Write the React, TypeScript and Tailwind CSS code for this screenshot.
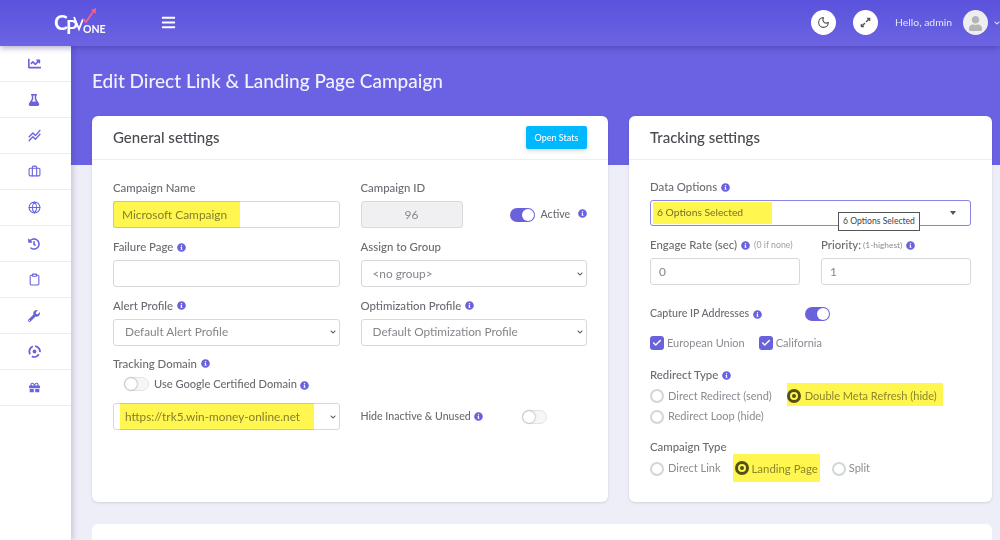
import { ReactNode } from 'react';
import { FaBars, FaChartLine, FaChevronDown, FaExpandAlt, FaFlask, FaGift, FaHistory, FaInfoCircle, FaUser, FaWrench } from 'react-icons/fa';
import { MdStackedLineChart } from 'react-icons/md';
import { Briefcase, Check, Clipboard, Globe, Moon } from 'lucide-react';

const Logo = () => (
  <svg width="56" height="30" viewBox="0 0 56 30" fill="none">
    <text x="0" y="22" fontFamily="Lato, sans-serif" fontSize="21" fontWeight="700" fill="#fff" letterSpacing="-2">
      C<tspan dy="4" fontSize="19">P</tspan>
    </text>
    <path d="M20 9 L25 21 L29 11" stroke="#fff" strokeWidth="1.8" />
    <path d="M29 11 L32 14 L39 4" stroke="#f2608f" strokeWidth="1.9" />
    <path d="M37 2 L42 0 L41.5 6 Z" fill="#f2608f" />
    <text x="29" y="25" fontFamily="Lato, sans-serif" fontSize="10.5" fontWeight="700" fill="#fff">ONE</text>
  </svg>
);

const SpinIcon = () => (
  <svg width="13" height="13" viewBox="0 0 24 24" fill="none" stroke="currentColor" strokeWidth="3.4">
    <circle cx="12" cy="12" r="3.5" fill="currentColor" stroke="none" />
    <path d="M4 17 A10 10 0 0 1 9 2.5" />
    <path d="M13 2 A10 10 0 0 1 22 13" />
    <path d="M20 17 A10 10 0 0 1 7 21" />
  </svg>
);

const navIcons: ReactNode[] = [
  <FaChartLine size={13} />,
  <FaFlask size={12} />,
  <MdStackedLineChart size={15} />,
  <Briefcase size={13} />,
  <Globe size={13} />,
  <FaHistory size={12} />,
  <Clipboard size={13} />,
  <FaWrench size={12} />,
  <SpinIcon />,
  <FaGift size={11} />,
];

const Info = ({ className = '' }: { className?: string }) => (
  <FaInfoCircle size={9} className={`inline-block shrink-0 text-[#6a62dc] ${className}`} />
);

const Label = ({ children, className = 'text-[11.4px]' }: { children: ReactNode; className?: string }) => (
  <label className={`flex h-[18px] items-center gap-1 font-medium whitespace-nowrap text-[#6b6b72] ${className}`}>{children}</label>
);

const inputCls =
  'h-[27px] w-full rounded-[3px] border border-[#d8d8dc] bg-white px-[8px] text-[11.9px] text-[#85858c] outline-none';

const Select = ({ value, className = 'mt-[4px]' }: { value: string; className?: string }) => (
  <div className={`relative ${className}`}>
    <select className="h-[27px] w-full appearance-none rounded-[3px] border border-[#d8d8dc] bg-white pl-[11px] text-[11.8px] text-[#85858c] outline-none">
      <option>{value}</option>
    </select>
    <FaChevronDown size={6} className="pointer-events-none absolute right-[4px] top-[11px] text-[#55555c]" />
  </div>
);

const Toggle = ({ on }: { on?: boolean }) =>
  on ? (
    <span className="flex h-[14px] w-[25px] items-center justify-end rounded-full bg-[#6a62dc] pr-[1px]">
      <span className="h-[12px] w-[12px] rounded-full bg-white" />
    </span>
  ) : (
    <span className="flex h-[14px] w-[25px] items-center rounded-full border border-[#e4e4e8] bg-[#f6f6f8]">
      <span className="h-[12px] w-[12px] rounded-full bg-white shadow-[0_0_2px_rgba(0,0,0,0.5)]" />
    </span>
  );

const Radio = ({ on, label, className = 'text-[11px] gap-[4px]' }: { on?: boolean; label: string; className?: string }) => (
  <span className={`flex items-center whitespace-nowrap text-[#8b8b92] ${className}`}>
    {on ? (
      <span className="flex h-[14px] w-[14px] items-center justify-center rounded-full border-[3px] border-[#55534a]">
        <span className="h-[4px] w-[4px] rounded-full bg-[#55534a]" />
      </span>
    ) : (
      <span className="h-[14px] w-[14px] rounded-full border-2 border-[#d2d6d8] bg-white" />
    )}
    {label}
  </span>
);

const CheckItem = ({ label }: { label: string }) => (
  <span className="flex items-center gap-[3px] text-[11px] text-[#8b8b92]">
    <span className="flex h-[14px] w-[14px] items-center justify-center rounded-[3px] bg-[#6a62dc] text-white">
      <Check size={10} strokeWidth={3.5} />
    </span>
    {label}
  </span>
);

const Hl = ({ className }: { className: string }) => (
  <span className={`pointer-events-none absolute bg-[#fff64f] mix-blend-multiply ${className}`} />
);

const CardHead = ({ title, action }: { title: string; action?: ReactNode }) => (
  <div className="flex h-[44px] items-center justify-between border-b border-[#eeeef2] px-[21px]">
    <h2 className="text-[15px] font-medium text-[#4a4a50]">{title}</h2>
    {action}
  </div>
);

export default function App() {
  return (
    <div className="flex h-[540px] w-[1000px] flex-col overflow-hidden bg-[#eeeef8] font-['Lato',sans-serif]">
      {/* Top bar */}
      <header className="z-20 flex h-[46px] shrink-0 items-center bg-gradient-to-b from-[#5a52dc] to-[#6c64e2] pb-[1px] pl-[54px] shadow-[0_2px_6px_rgba(40,30,120,0.35)]">
        <Logo />
        <FaBars size={15} className="ml-[51px] text-white" />
        <div className="ml-auto flex items-center">
          <span className="flex h-[25px] w-[25px] items-center justify-center rounded-full bg-white text-[#55555c]">
            <Moon size={13} />
          </span>
          <span className="ml-[17px] flex h-[25px] w-[25px] items-center justify-center rounded-full bg-white text-[#55555c]">
            <FaExpandAlt size={11} />
          </span>
          <span className="ml-[17px] text-[10.4px] text-[#e6e4fb]">Hello, admin</span>
          <span className="ml-[11px] flex h-[25px] w-[25px] items-end justify-center overflow-hidden rounded-full bg-[#eeeeee] text-[#b5b5b8]">
            <FaUser size={15} className="mb-[4px]" />
          </span>
          <FaChevronDown size={6} className="ml-[6px] text-[#e6e4fb]" />
        </div>
      </header>

      <div className="flex min-h-0 flex-1">
        {/* Sidebar */}
        <aside className="z-10 w-[71px] shrink-0 bg-white shadow-[2px_0_6px_rgba(40,30,90,0.2)]">
          {navIcons.map((icon, i) => (
            <div key={i} className="flex h-[36px] items-center justify-center border-b border-[#ececf0] pr-[3px] text-[#6a62dc]">
              {icon}
            </div>
          ))}
        </aside>

        {/* Content */}
        <main className="min-w-0 flex-1 bg-[linear-gradient(to_bottom,#6a62e2_0,#6a62e2_119px,#eeeef8_119px)] pl-[21px] pr-[8px]">
          <h1 className="flex h-[70px] items-center text-[19px] font-medium text-[#f2f1ff]">
            Edit Direct Link &amp; Landing Page Campaign
          </h1>
          <div className="flex gap-[21px]">
            {/* General settings */}
            <section className="h-[386px] w-[516px] rounded-[6px] bg-white shadow-sm">
              <CardHead
                title="General settings"
                action={
                  <button className="h-[23px] w-[61px] rounded-[2px] bg-[#00b8ff] text-[9px] font-medium text-white shadow-[0_2px_4px_rgba(0,0,0,0.15)]">
                    Open Stats
                  </button>
                }
              />
              <div className="grid grid-cols-2 gap-x-[21px] px-[21px] pt-[19px]">
                <div>
                  <Label>Campaign Name</Label>
                  <div className="relative mt-[4px]">
                    <input className={inputCls} defaultValue="Microsoft Campaign" />
                    <Hl className="inset-y-0 left-0 w-[127px]" />
                  </div>
                </div>
                <div>
                  <Label>Campaign ID</Label>
                  <div className="mt-[4px] flex items-center">
                    <input className={`${inputCls} !w-[102px] shrink-0 !bg-[#f0f0f2] text-center`} defaultValue="96" />
                    <span className="ml-[47px]"><Toggle on /></span>
                    <span className="ml-[6px] text-[10.6px] font-medium text-[#6b6b72]">Active</span>
                    <Info className="mb-[3px] ml-[8px]" />
                  </div>
                </div>

                <div className="mt-[10px]">
                  <Label>Failure Page <Info /></Label>
                  <input className={`${inputCls} mt-[4px]`} />
                </div>
                <div className="mt-[10px]">
                  <Label>Assign to Group</Label>
                  <Select value="<no group>" />
                </div>

                <div className="mt-[9px]">
                  <Label>Alert Profile <Info /></Label>
                  <Select value="Default Alert Profile" />
                </div>
                <div className="mt-[9px]">
                  <Label>Optimization Profile <Info /></Label>
                  <Select value="Default Optimization Profile" />
                </div>

                <div className="mt-[9px]">
                  <Label>Tracking Domain <Info /></Label>
                  <div className="mt-[2px] flex h-[19px] items-center pl-[11px] text-[11.1px] font-medium text-[#6b6b72]">
                    <Toggle />
                    <span className="ml-[5px]">Use Google Certified Domain</span>
                    <Info className="ml-[3px] mt-[2px]" />
                  </div>
                  <div className="relative mt-[9px]">
                    <Select value="https://trk5.win-money-online.net" className="" />
                    <Hl className="inset-y-0 left-[7px] w-[194px]" />
                  </div>
                </div>
                <div className="mt-[9px] flex items-end">
                  <div className="flex h-[27px] w-full items-center text-[10.6px] font-medium text-[#6b6b72]">
                    <span className="flex w-[161px] items-center">
                      Hide Inactive &amp; Unused
                      <Info className="ml-[3px]" />
                    </span>
                    <Toggle />
                  </div>
                </div>
              </div>
            </section>

            {/* Tracking settings */}
            <section className="h-[386px] w-[363px] rounded-[6px] bg-white shadow-sm">
              <CardHead title="Tracking settings" />
              <div className="px-[21px] pt-[18px]">
                <Label>Data Options <Info /></Label>
                <div className="relative mt-[4px] flex h-[26px] items-center justify-between rounded-[3px] border border-[#8b84e8] pl-[6px] pr-[14px] text-[10.3px] text-[#75757c]">
                  <span>6 Options Selected</span>
                  <span className="h-0 w-0 border-x-[3px] border-t-[4px] border-x-transparent border-t-[#55555c]" />
                  <Hl className="inset-y-[1px] left-[2px] w-[119px]" />
                  <span className="absolute left-[187px] top-[11px] z-10 flex h-[19px] w-[82px] items-center justify-center border border-[#555] bg-white text-[8.6px] whitespace-nowrap text-[#444]">
                    6 Options Selected
                  </span>
                </div>

                <div className="mt-[10px] grid grid-cols-2 gap-x-[21px]">
                  <div>
                    <Label>Engage Rate (sec) <Info /><span className="text-[8.8px] font-normal text-[#a0a0a6]">(0 if none)</span></Label>
                    <input className={`${inputCls} mt-[4px]`} defaultValue="0" />
                  </div>
                  <div>
                    <Label>Priority: <span className="-ml-[2px] text-[8.4px] font-normal text-[#8b8b92]">(1-highest)</span><Info /></Label>
                    <input className={`${inputCls} mt-[4px]`} defaultValue="1" />
                  </div>
                </div>

                <div className="mt-[20px] flex h-[18px] items-center">
                  <span className="w-[155px]">
                    <Label className="text-[10.6px]">Capture IP Addresses <Info /></Label>
                  </span>
                  <Toggle on />
                </div>
                <div className="mt-[11px] flex h-[18px] items-center gap-[14px]">
                  <CheckItem label="European Union" />
                  <CheckItem label="California" />
                </div>

                <div className="mt-[14px]">
                  <Label>Redirect Type <Info /></Label>
                </div>
                <div className="mt-[2px] flex h-[20px] items-center gap-[15px]">
                  <Radio label="Direct Redirect (send)" />
                  <span className="relative flex h-[20px] items-center">
                    <Radio on label="Double Meta Refresh (hide)" />
                    <Hl className="-top-[3px] bottom-0 left-0 -right-[6px]" />
                  </span>
                </div>
                <div className="flex h-[21px] items-center">
                  <Radio label="Redirect Loop (hide)" />
                </div>

                <div className="mt-[11px]">
                  <Label>Campaign Type</Label>
                </div>
                <div className="mt-[2px] flex h-[21px] items-center gap-[14px]">
                  <Radio label="Direct Link" />
                  <span className="relative flex h-[21px] items-center">
                    <Radio on label="Landing Page" className="gap-[3px] text-[11.4px]" />
                    <Hl className="-top-[4px] -bottom-[3px] -left-[2px] -right-[2px]" />
                  </span>
                  <Radio label="Split" className="gap-[3px] text-[11px]" />
                </div>
              </div>
            </section>
          </div>
          <div className="mt-[22px] h-[80px] rounded-[6px] bg-white" />
        </main>
      </div>
    </div>
  );
}
